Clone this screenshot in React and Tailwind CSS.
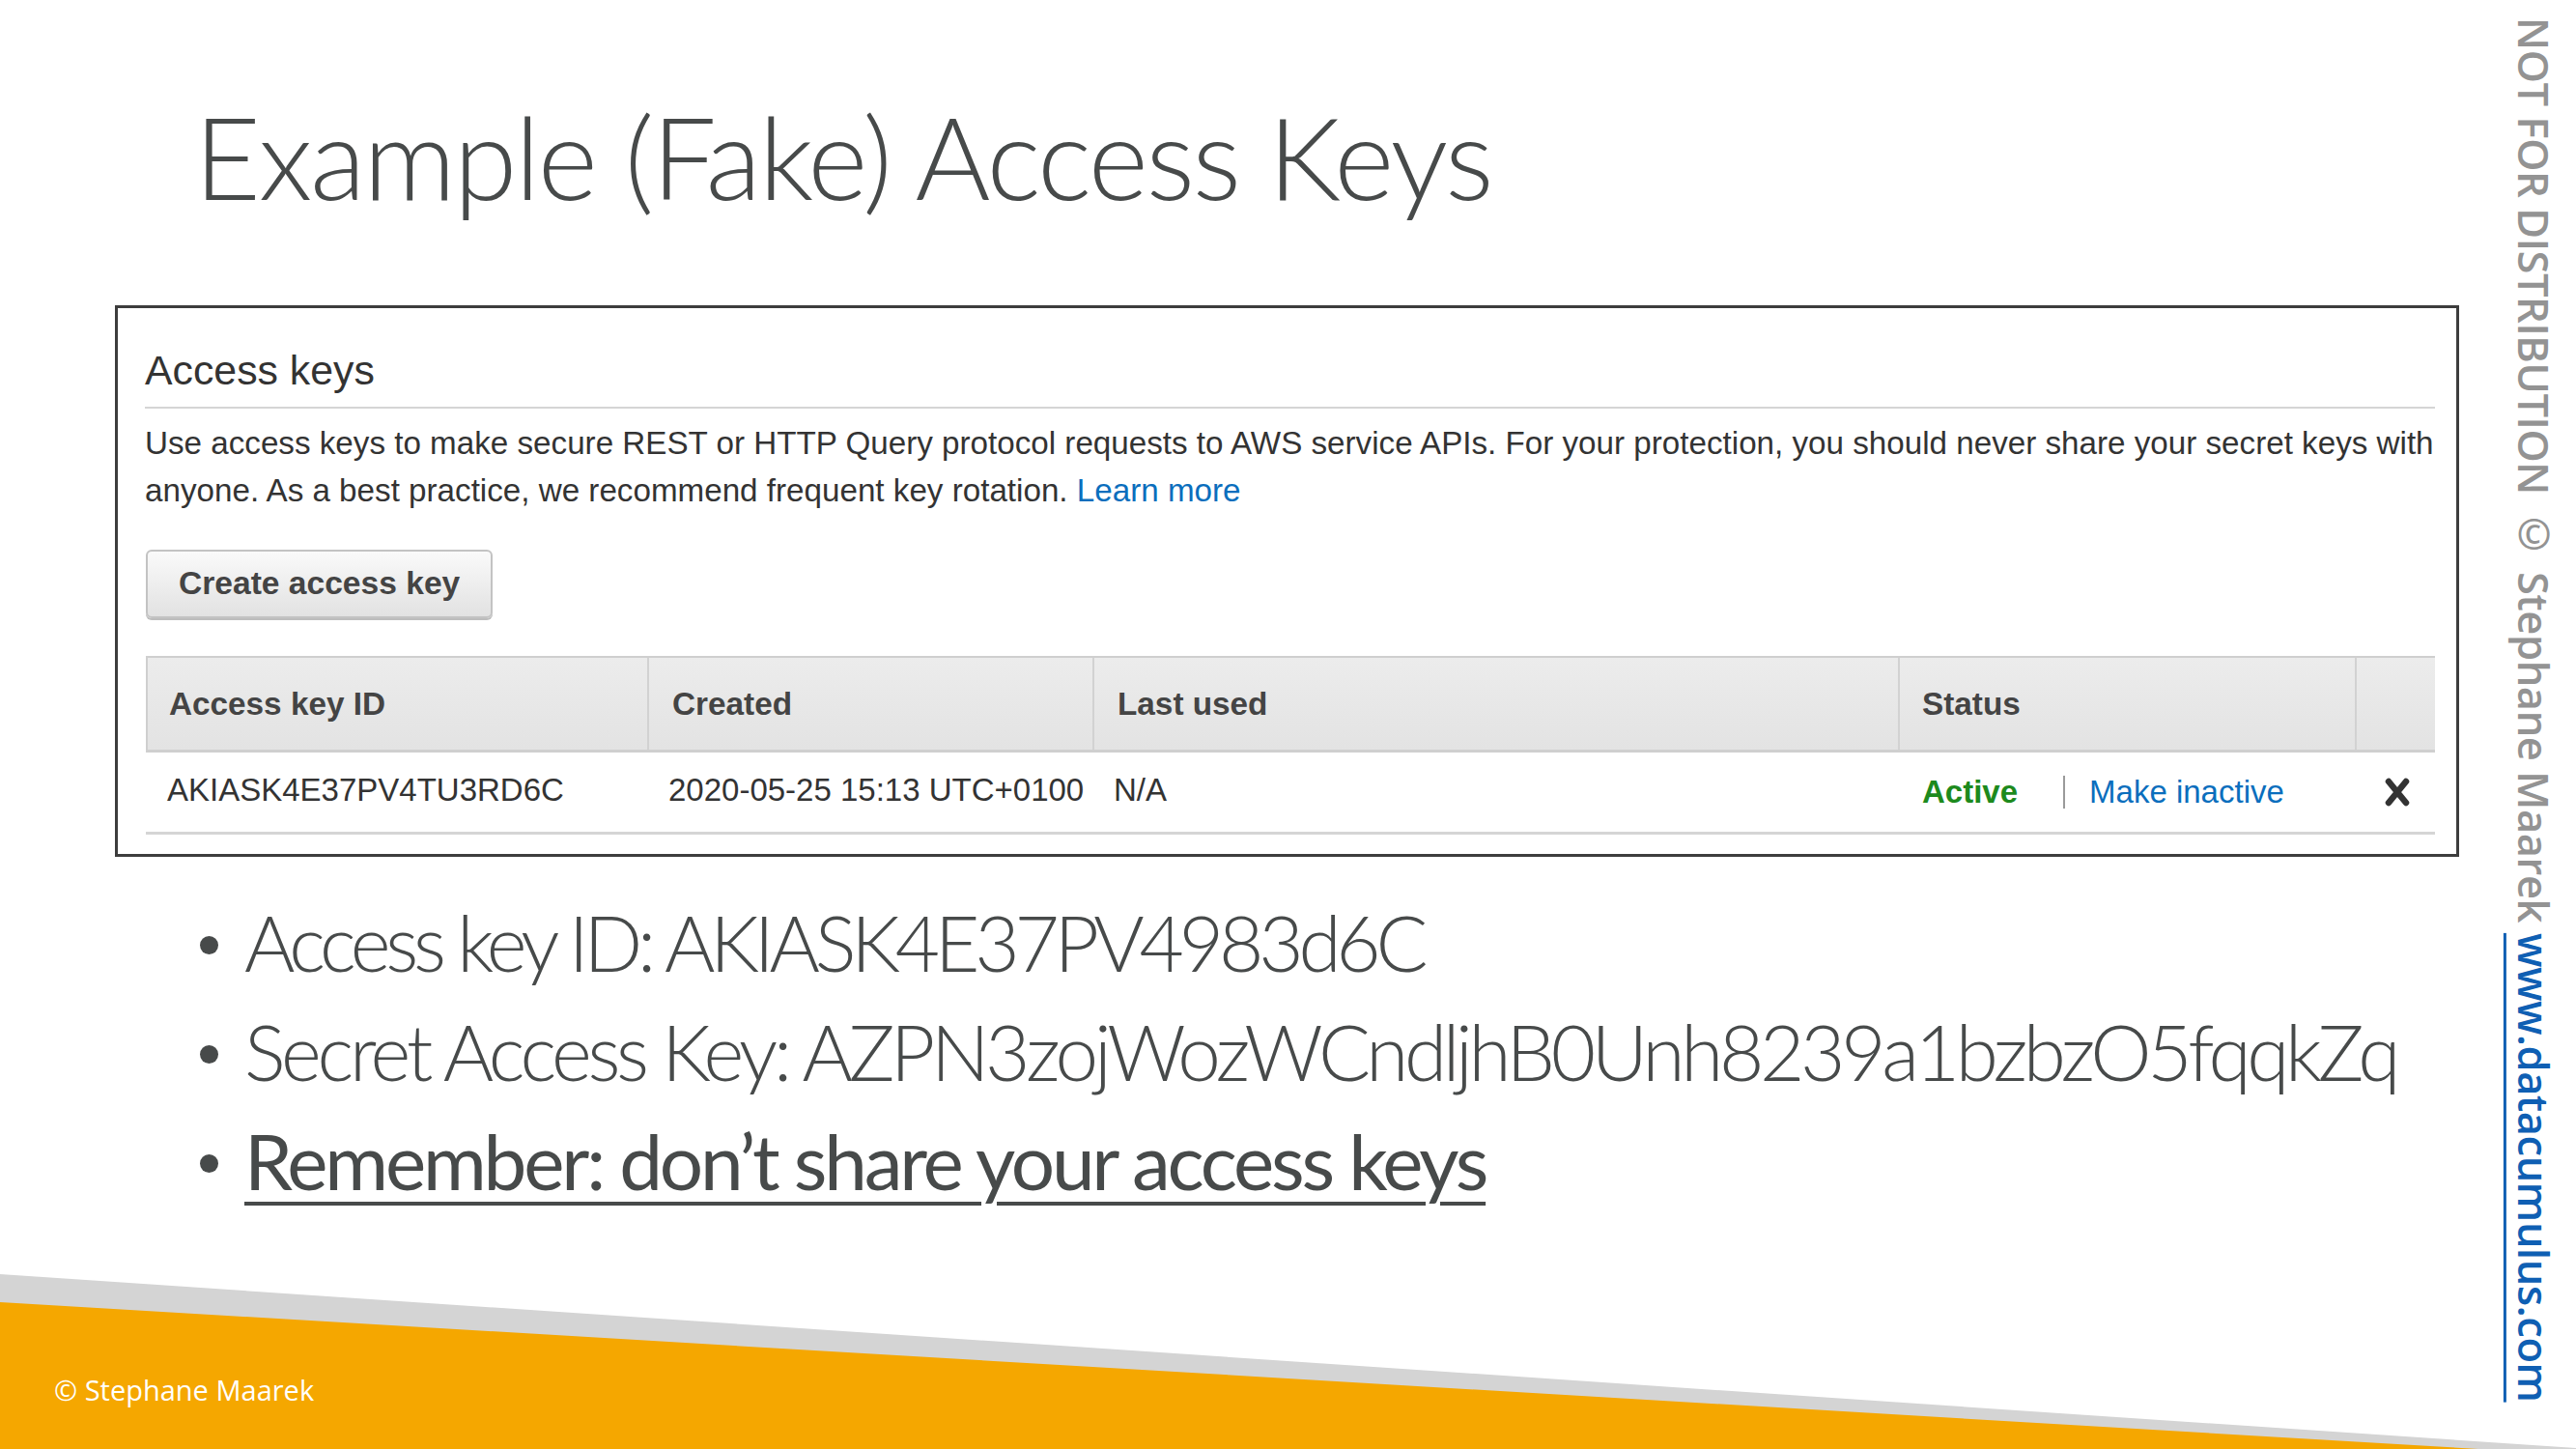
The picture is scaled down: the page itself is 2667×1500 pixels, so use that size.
import React from 'react';

const slideFont = { fontFamily: 'Lato, "Open Sans", sans-serif' };

// Heavy "times" glyph used in the AWS console table
const CloseIcon = () => (
  <svg width="26" height="30" viewBox="0 0 26 30" className="block">
    <path d="M4 4 L22 26 M22 4 L4 26" stroke="#333" strokeWidth="6.5" strokeLinecap="round" />
  </svg>
);

const Footer = () => (
  <svg
    className="absolute left-0 top-0 pointer-events-none"
    width="2667"
    height="1500"
    viewBox="0 0 2667 1500"
  >
    <polygon points="0,1319 2667,1499 2667,1500 0,1500" fill="#d4d4d4" />
    <polygon points="0,1348 2667,1506 0,1506" fill="#f5a700" />
  </svg>
);

const Watermark = () => (
  <div
    className="absolute right-[22px] top-[18px] [writing-mode:vertical-rl] text-[43.5px] font-semibold leading-none whitespace-nowrap tracking-[-0.01em]"
    style={{ fontFamily: '"Open Sans", sans-serif' }}
  >
    <span className="text-[#939393]">NOT FOR DISTRIBUTION © Stephane Maarek </span>
    <span className="text-[#0f5fb3] underline decoration-[3px] underline-offset-[6px]">
      www.datacumulus.com
    </span>
  </div>
);

const AccessKeysPanel = () => {
  const cols = 'grid grid-cols-[519px_461px_834px_473px_83px]';

  return (
    <div
      className="ml-[119px] mt-[95px] w-[2427px] h-[571px] border-[3px] border-[#3d3d3d] pl-[28px] pr-[22px] pt-[39px] text-[#444]"
      style={{ fontFamily: '"Liberation Sans", Arial, sans-serif' }}
    >
      <h2 className="text-[42.8px] leading-[50px] text-[#333]">Access keys</h2>
      <div className="mt-[13px] h-[2px] bg-[#d5d5d5]" />

      <p className="mt-[11px] text-[33.2px] leading-[49px] text-[#333] whitespace-nowrap">
        Use access keys to make secure REST or HTTP Query protocol requests to AWS service APIs. For your protection, you should never share your secret keys with
        <br />
        anyone. As a best practice, we recommend frequent key rotation.{' '}
        <span className="text-[#0a6ebd]">Learn more</span>
      </p>

      <button className="mt-[37px] ml-px h-[71px] w-[359px] rounded-[6px] border-2 border-[#c3c3c3] bg-gradient-to-b from-[#fafafa] to-[#e2e2e2] pl-[32px] text-left text-[33.6px] font-bold text-[#444] shadow-[0_2px_0_#bdbdbd]">
        Create access key
      </button>

      <div className="mt-[39px] ml-px">
        <div className={`${cols} h-[100px] border-t-2 border-b-[3px] border-l-2 border-[#cfcfcf] bg-gradient-to-b from-[#ececec] to-[#e3e3e3] text-[33.3px] font-bold text-[#444]`}>
          <div className="flex items-center pl-[22px] border-r-2 border-[#d2d2d2]">Access key ID</div>
          <div className="flex items-center pl-[24px] border-r-2 border-[#d2d2d2]">Created</div>
          <div className="flex items-center pl-[24px] border-r-2 border-[#d2d2d2]">Last used</div>
          <div className="flex items-center pl-[23px] border-r-2 border-[#d2d2d2]">Status</div>
          <div />
        </div>
        <div className={`${cols} h-[85px] border-b-[3px] border-[#d5d5d5] text-[33px] text-[#333]`}>
          <div className="flex items-center pl-[22px] pb-[4px]">AKIASK4E37PV4TU3RD6C</div>
          <div className="flex items-center pl-[22px] pb-[4px] whitespace-nowrap">2020-05-25 15:13 UTC+0100</div>
          <div className="flex items-center pl-[22px] pb-[4px]">N/A</div>
          <div className="flex items-center pl-[25px]">
            <span className="font-bold text-[#1d8a1d]">Active</span>
            <span className="ml-[47px] h-[34px] w-[2px] bg-[#9a9a9a]" />
            <span className="ml-[25px] text-[#0a6ebd]">Make inactive</span>
          </div>
          <div className="flex items-center justify-center pl-[4px]">
            <CloseIcon />
          </div>
        </div>
      </div>
    </div>
  );
};

const Bullet = ({ children, className = '' }) => (
  <li className="flex items-baseline whitespace-nowrap">
    <span className="w-[54px] shrink-0">
      <span className="inline-block mb-[18px] ml-[8px] w-[19px] h-[19px] rounded-full bg-[#474a4a]" />
    </span>
    <span className={className}>{children}</span>
  </li>
);

export default function App() {
  return (
    <div className="relative w-[2667px] h-[1500px] overflow-hidden bg-white">
      <Footer />
      <Watermark />

      <div className="relative">
        <h1
          className="ml-[201px] pt-[102px] text-[119px] font-light leading-none tracking-[-0.02em] text-[#474a4a]"
          style={slideFont}
        >
          Example (Fake) Access Keys
        </h1>

        <AccessKeysPanel />

        <ul
          className="ml-[199px] mt-[32px] flex flex-col text-[80px] leading-[113px] text-[#474a4a]"
          style={slideFont}
        >
          <Bullet className="font-light tracking-[-0.065em]">Access key ID: AKIASK4E37PV4983d6C</Bullet>
          <Bullet className="font-light tracking-[-0.054em]">
            Secret Access Key: AZPN3zojWozWCndljhB0Unh8239a1bzbzO5fqqkZq
          </Bullet>
          <Bullet className="underline decoration-[4px] underline-offset-[12px] tracking-[-0.04em]">
            Remember: don’t share your access keys
          </Bullet>
        </ul>

        <div
          className="absolute left-[56px] top-[1417px] text-[29px] text-white"
          style={{ fontFamily: '"Open Sans", sans-serif' }}
        >
          © Stephane Maarek
        </div>
      </div>
    </div>
  );
}
